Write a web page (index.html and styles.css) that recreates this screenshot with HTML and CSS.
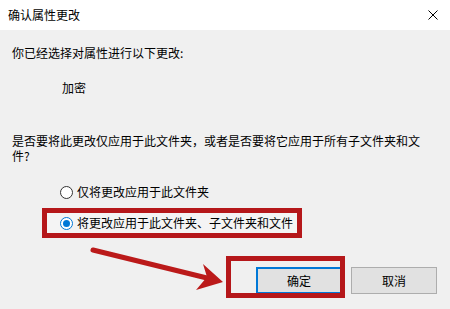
FILE: index.html
```html
<!DOCTYPE html>
<html lang="zh-CN">
<head>
    <meta charset="UTF-8">
    <title>确认属性更改</title>
    <link rel="stylesheet" href="styles.css">
</head>
<body>
    <div class="dialog">
        <div class="titlebar">
            <span class="title">确认属性更改</span>
            <svg class="close" width="10" height="10" viewBox="0 0 10 10">
                <path d="M0.5 0.5 L9.5 9.5 M9.5 0.5 L0.5 9.5" stroke="#000" stroke-width="1" fill="none"/>
            </svg>
        </div>

        <div class="content">
            <p class="intro">你已经选择对属性进行以下更改:</p>
            <p class="change">加密</p>
            <p class="question">是否要将此更改仅应用于此文件夹，或者是否要将它应用于所有子文件夹和文件?</p>

            <div class="options">
                <label class="option"><span class="radio"></span>仅将更改应用于此文件夹</label>
                <label class="option highlight"><span class="radio checked"></span>将更改应用于此文件夹、子文件夹和文件</label>
            </div>
        </div>

        <div class="actions">
            <div class="ok-wrap">
                <button class="btn btn-default">确定</button>
                <span class="mark"></span>
            </div>
            <button class="btn">取消</button>
        </div>

        <!-- annotation arrow pointing at the OK button -->
        <svg class="arrow" width="450" height="309" viewBox="0 0 450 309">
            <line x1="93" y1="250" x2="211" y2="279" stroke="#bb1a1a" stroke-width="5" stroke-linecap="round"/>
            <polygon points="223,282 203,264 207,277 196,290" fill="#bb1a1a"/>
        </svg>
    </div>
</body>
</html>
```

FILE: styles.css
```css
* {
    margin: 0;
    padding: 0;
    box-sizing: border-box;
}

body {
    width: 450px;
    height: 309px;
    overflow: hidden;
    background-color: #f0f0f0;
    color: #000;
    font-family: "Noto Sans CJK SC", "Liberation Sans", sans-serif;
    font-size: 12px;
}

.dialog {
    position: relative;
    width: 450px;
    height: 309px;
}

.titlebar {
    height: 30px;
    background-color: #fff;
    display: flex;
    align-items: center;
    justify-content: space-between;
    padding: 0 12px 0 8px;
    line-height: 16px;
}

.close {
    display: block;
}

.content {
    padding: 15px 20px 0 12px;
}

.intro {
    line-height: 16px;
}

.change {
    margin: 19px 0 0 50px;
    line-height: 16px;
}

.question {
    margin-top: 37px;
    line-height: 15px;
}

.options {
    margin-top: 21px;
    display: flex;
    flex-direction: column;
    align-items: flex-start;
}

.option {
    display: inline-flex;
    align-items: center;
    gap: 4px;
    line-height: 16px;
    padding-left: 48px;
}

.option.highlight {
    margin: 8px 0 0 30px;
    padding: 2px 4px 2px 13px;
    border: 5px solid #b5171a;
    background-color: #f4f4f4;
}

.radio {
    width: 13px;
    height: 13px;
    border-radius: 50%;
    border: 1px solid #333;
    background-color: #fff;
    display: flex;
    align-items: center;
    justify-content: center;
}

.radio.checked {
    border-color: #0078d7;
}

.radio.checked::after {
    content: "";
    width: 7px;
    height: 7px;
    border-radius: 50%;
    background-color: #0078d7;
}

.actions {
    margin-top: 29px;
    display: flex;
    justify-content: flex-end;
    gap: 9px;
    padding-right: 13px;
}

.ok-wrap {
    position: relative;
}

.btn {
    display: block;
    width: 86px;
    height: 27px;
    background-color: #e1e1e1;
    border: 1px solid #adadad;
    font-family: inherit;
    font-size: 12px;
    color: #000;
}

.btn-default {
    border: 2px solid #0078d7;
}

.mark {
    position: absolute;
    left: -30px;
    top: -11px;
    right: -3px;
    bottom: -4px;
    border: 5px solid #b5171a;
}

.arrow {
    position: absolute;
    left: 0;
    top: 0;
    pointer-events: none;
}
```
